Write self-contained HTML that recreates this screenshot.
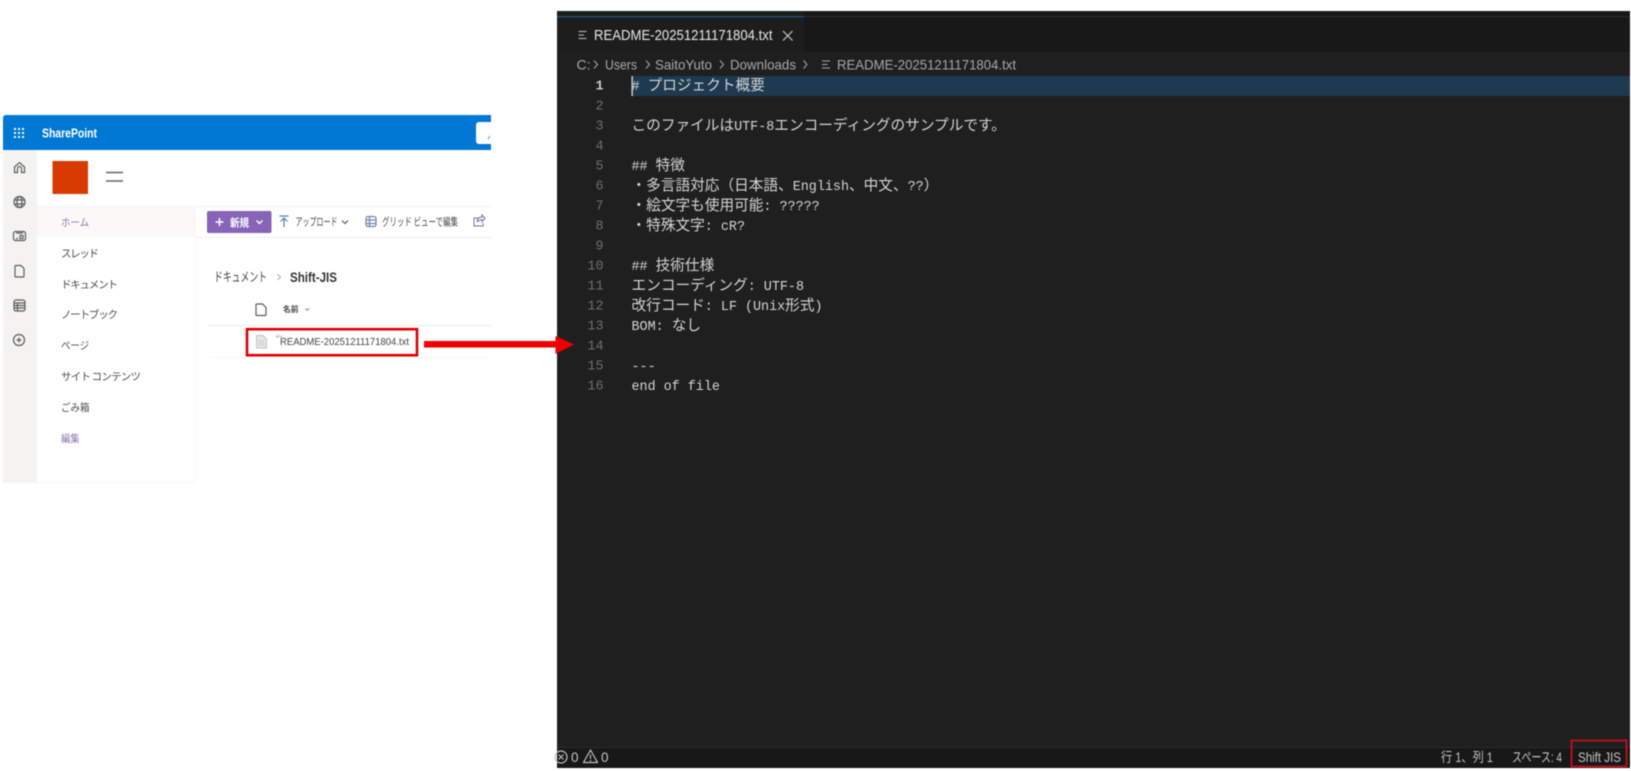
<!DOCTYPE html>
<html lang="ja"><head><meta charset="utf-8"><title>README</title>
<style>
html,body{margin:0;padding:0;background:#fff;width:1631px;height:771px;overflow:hidden}
svg{display:block;filter:blur(.45px)}
text{font-family:"Liberation Sans","Noto Sans CJK JP",sans-serif;dominant-baseline:auto}
.j{font-family:"Noto Sans CJK JP","Liberation Sans",sans-serif}
.nav{font-family:"Noto Sans CJK JP",sans-serif;font-size:10.5px;fill:#4c4c4c}
.cmd{font-family:"Noto Sans CJK JP",sans-serif;font-size:11px;fill:#4c4c4c}
.m{font-family:"Liberation Mono","Noto Sans CJK JP",monospace;font-size:13.4px;fill:#d4d4d4;white-space:pre}
.m tspan.c{font-family:"Noto Sans CJK JP",sans-serif;font-size:14.67px}
.n{font-family:"Liberation Mono",monospace;font-size:13.4px;fill:#6e6e6e;text-anchor:end}
.s{font-family:"Liberation Sans","Noto Sans CJK JP",sans-serif;font-size:13.5px;fill:#c4c4c4}
.ic{fill:none;stroke:#5c5c5c;stroke-width:1.2}
.vs{fill:none;stroke:#c0c0c0;stroke-width:1}
</style></head><body>
<svg width="1631" height="771" viewBox="0 0 1631 771" xmlns="http://www.w3.org/2000/svg">
<rect width="1631" height="771" fill="#fff"/>

<!-- SharePoint -->
<rect x="3" y="150" width="488" height="333" fill="#fff"/>
<rect x="3" y="150" width="34" height="333" fill="#f4f3f2"/>
<rect x="37" y="206" width="454" height="1" fill="#f3f2f1"/>
<rect x="37" y="207" width="159" height="30" fill="#faf9f8"/>
<rect x="196" y="237" width="295" height="1" fill="#f0efee"/>
<rect x="195" y="207" width="1" height="276" fill="#f8f7f6"/>
<rect x="37" y="482" width="159" height="1" fill="#f8f7f6"/>
<path d="M3 118a3 3 0 0 1 3-3H491V150H3Z" fill="#0078d4"/>
<path d="M491 122H479a3 3 0 0 0-3 3V141a3 3 0 0 0 3 3H491Z" fill="#fff"/>
<path d="M490 136l-2 3" stroke="#888" fill="none"/>
<g fill="#fff">
<rect x="14" y="128" width="2" height="2"/><rect x="18" y="128" width="2" height="2"/><rect x="22" y="128" width="2" height="2"/>
<rect x="14" y="132" width="2" height="2"/><rect x="18" y="132" width="2" height="2"/><rect x="22" y="132" width="2" height="2"/>
<rect x="14" y="136" width="2" height="2"/><rect x="18" y="136" width="2" height="2"/><rect x="22" y="136" width="2" height="2"/>
</g>
<text x="42" y="137.500" font-size="12.500" font-weight="700" fill="#fff" textLength="55" lengthAdjust="spacingAndGlyphs">SharePoint</text>

<!-- rail icons -->
<path class="ic" d="M14.500 172.500V167l5-4.500 5 4.500v5.500h-3v-4a2 2 0 0 0-4 0v4Z"/>
<g class="ic"><circle cx="19.500" cy="202" r="5.500"/><ellipse cx="19.500" cy="202" rx="2.500" ry="5.500"/><path d="M14 200h11M14 204h11"/></g>
<g class="ic"><rect x="13.500" y="231.500" width="12" height="9" rx="2"/><path d="M16 233h7M16 238.500h2M20 235.500h3v3h-3Z"/></g>
<path class="ic" d="M15.500 265.500h5.500l3 3v7.500a1 1 0 0 1-1 1h-7a1 1 0 0 1-1-1v-9.500a1 1 0 0 1 .500-1Z"/>
<g class="ic"><rect x="14" y="300" width="11" height="11" rx="2"/><path d="M14 303h11M14 305.500h11M14 308h11M17.500 303v8"/></g>
<g class="ic"><circle cx="19" cy="340" r="5.500"/><path d="M16.500 340h5M19 337.500v5" stroke-width="1.300"/></g>

<!-- logo -->
<rect x="52.500" y="161" width="35.500" height="33" fill="#d83b01"/>
<path d="M106 172.500h17M106 181h17" stroke="#666" stroke-width="1.600"/>

<!-- nav -->
<text class="nav" x="61" y="226" style="fill:#8a74b5" textLength="28" lengthAdjust="spacingAndGlyphs">ホーム</text>
<text class="nav" x="61" y="257" textLength="38" lengthAdjust="spacing">スレッド</text>
<text class="nav" x="61" y="288" textLength="57" lengthAdjust="spacing">ドキュメント</text>
<text class="nav" x="61" y="318" textLength="57" lengthAdjust="spacing">ノートブック</text>
<text class="nav" x="61" y="349" textLength="28" lengthAdjust="spacingAndGlyphs">ページ</text>
<text class="nav" x="61" y="380" textLength="80" lengthAdjust="spacing">サイト コンテンツ</text>
<text class="nav" x="61" y="411" textLength="28.500" lengthAdjust="spacingAndGlyphs">ごみ箱</text>
<text class="nav" x="61" y="442" style="fill:#8a74b5" textLength="18.500" lengthAdjust="spacingAndGlyphs">編集</text>

<!-- command bar -->
<rect x="207" y="211" width="64.500" height="22" rx="2" fill="#8764b8"/>
<path d="M215.500 222h8M219.500 218v8" stroke="#fff" stroke-width="1.500"/>
<text x="230" y="226.500" class="j" font-size="11" font-weight="700" fill="#fff" textLength="19" lengthAdjust="spacingAndGlyphs">新規</text>
<path d="M256.500 220.500l3 3 3-3" stroke="#fff" stroke-width="1.400" fill="none"/>
<path class="ic" d="M279.500 216h9M284 227v-9M280.500 221.500l3.500-3.500 3.500 3.500" style="stroke:#5a7fa8"/>
<text class="cmd" x="295.500" y="225.500" textLength="42" lengthAdjust="spacingAndGlyphs">アップロード</text>
<path class="ic" d="M342 220.500l3 3 3-3" stroke-width="1.300"/>
<g class="ic" style="stroke:#6b87a8"><rect x="366" y="216.500" width="10" height="10" rx="2"/><path d="M366 220h10M366 223.500h10M369.500 216.500v10"/></g>
<text class="cmd" x="382" y="225.500" textLength="76" lengthAdjust="spacingAndGlyphs">グリッド ビューで編集</text>
<path class="ic" d="M479 218h-5v8h9v-3M477 222c0-3 2-5 5-5v-2l3 3.500-3 3v-2c-2 0-3 1-4 2.500" style="stroke:#7a6aa8;stroke-width:1"/>

<!-- breadcrumb -->
<text class="j" x="214" y="281.500" font-size="13" fill="#444" textLength="53" lengthAdjust="spacingAndGlyphs">ドキュメント</text>
<path d="M277.500 274l3 3-3 3" stroke="#aaa" fill="none"/>
<text x="290" y="282" font-size="13.500" font-weight="700" fill="#333" textLength="47" lengthAdjust="spacingAndGlyphs">Shift-JIS</text>

<!-- list -->
<path class="ic" d="M257 304h5.500l3.500 3.500v7a1 1 0 0 1-1 1h-8a1 1 0 0 1-1-1v-9.500a1 1 0 0 1 1-1Z"/>
<text class="j" x="283" y="312" font-size="8" font-weight="700" fill="#444" textLength="15.500" lengthAdjust="spacingAndGlyphs">名前</text>
<path d="M305.500 308.500l1.800 1.800 1.800-1.800" stroke="#888" fill="none"/>
<rect x="208" y="325" width="283" height="1" fill="#ecebea"/>
<rect x="208" y="357" width="283" height="1" fill="#f8f7f6"/>
<path d="M256.500 335.500h6.500l3.500 3.500v9h-10Z" fill="#e6e6e6" stroke="#c4c4c4"/>
<path d="M258.500 341h6M258.500 343h6M258.500 345h6" stroke="#cfcfcf"/>
<path d="M276 336l2 1.500M278.500 334.500v2.500M280 337l2-1" stroke="#999" fill="none" stroke-width=".8"/>
<text x="280" y="345" font-size="10.500" fill="#444" textLength="129" lengthAdjust="spacingAndGlyphs">README-20251211171804.txt</text>
<rect x="247" y="329.200" width="170" height="26" fill="none" stroke="#e00000" stroke-width="2.600"/>

<!-- VS Code -->
<rect x="557" y="11" width="1073" height="757" fill="#1f1f1f"/>
<rect x="557" y="11" width="1073" height="41" fill="#181818"/>
<rect x="557" y="11" width="247" height="41" fill="#1d1d1d"/>
<rect x="804" y="16" width="826" height="1" fill="#2b2b2b"/>
<rect x="557" y="16" width="247" height="1.400" fill="#1f4f75"/>
<path class="vs" d="M578.500 31.500h8M578.500 35h5.500M578.500 38.500h8"/>
<text x="594" y="40" font-size="15" fill="#e6e6e6" textLength="178.500" lengthAdjust="spacingAndGlyphs">README-20251211171804.txt</text>
<path d="M783 31l9.500 9.500M792.500 31l-9.500 9.500" stroke="#d0d0d0" stroke-width="1.100"/>

<g font-size="14" fill="#a8a8a8">
<text x="576.500" y="69.500">C:</text>
<path d="M594 60.500l3.500 4-3.500 4M646 60.500l3.500 4-3.500 4M720 60.500l3.500 4-3.500 4M803.500 60.500l3.500 4-3.500 4" stroke="#a8a8a8" fill="none"/>
<text x="605" y="69.500" textLength="32" lengthAdjust="spacingAndGlyphs">Users</text>
<text x="655" y="69.500" textLength="57" lengthAdjust="spacingAndGlyphs">SaitoYuto</text>
<text x="730" y="69.500" textLength="66" lengthAdjust="spacingAndGlyphs">Downloads</text>
<path d="M822 61h8M822 64.500h5.500M822 68h8" stroke="#a8a8a8" fill="none"/>
<text x="837" y="69.500" textLength="179" lengthAdjust="spacingAndGlyphs">README-20251211171804.txt</text>
</g>

<!-- editor -->
<rect x="632" y="76" width="998" height="20" fill="#1e3a50"/>
<rect x="631.400" y="76" width="1.500" height="20" fill="#c8c8c8"/>

<g transform="translate(0,-1.500)">
<text class="n" x="603.500" y="91" style="fill:#ccc;font-weight:700">1</text>
<text class="n" x="603.500" y="111">2</text>
<text class="n" x="603.500" y="131">3</text>
<text class="n" x="603.500" y="151">4</text>
<text class="n" x="603.500" y="171">5</text>
<text class="n" x="603.500" y="191">6</text>
<text class="n" x="603.500" y="211">7</text>
<text class="n" x="603.500" y="231">8</text>
<text class="n" x="603.500" y="251">9</text>
<text class="n" x="603.500" y="271">10</text>
<text class="n" x="603.500" y="291">11</text>
<text class="n" x="603.500" y="311">12</text>
<text class="n" x="603.500" y="331">13</text>
<text class="n" x="603.500" y="351">14</text>
<text class="n" x="603.500" y="371">15</text>
<text class="n" x="603.500" y="391">16</text>
</g>

<g transform="translate(-.5,-1)">
<text class="m" x="632" y="91" xml:space="preserve"># <tspan class="c">プロジェクト概要</tspan></text>
<text class="m" x="632" y="131" xml:space="preserve"><tspan class="c">このファイルは</tspan>UTF-8<tspan class="c">エンコーディングのサンプルです。</tspan></text>
<text class="m" x="632" y="171" xml:space="preserve">## <tspan class="c">特徴</tspan></text>
<text class="m" x="632" y="191" xml:space="preserve"><tspan class="c">・多言語対応（日本語、</tspan>English<tspan class="c">、中文、</tspan>??<tspan class="c">）</tspan></text>
<text class="m" x="632" y="211" xml:space="preserve"><tspan class="c">・絵文字も使用可能</tspan>: ?????</text>
<text class="m" x="632" y="231" xml:space="preserve"><tspan class="c">・特殊文字</tspan>: cR?</text>
<text class="m" x="632" y="271" xml:space="preserve">## <tspan class="c">技術仕様</tspan></text>
<text class="m" x="632" y="291" xml:space="preserve"><tspan class="c">エンコーディング</tspan>: UTF-8</text>
<text class="m" x="632" y="311" xml:space="preserve"><tspan class="c">改行コード</tspan>: LF (Unix<tspan class="c">形式</tspan>)</text>
<text class="m" x="632" y="331" xml:space="preserve">BOM: <tspan class="c">なし</tspan></text>
<text class="m" x="632" y="371" xml:space="preserve">---</text>
<text class="m" x="632" y="391" xml:space="preserve">end of file</text>
</g>

<!-- status bar -->
<rect x="557" y="747" width="1073" height="21" fill="#181818"/>
<rect x="557" y="747" width="1073" height="1" fill="#2b2b2b"/>
<circle cx="561" cy="757" r="6" fill="none" stroke="#c0c0c0" stroke-width="1.200"/>
<path d="M558.500 754.500l5 5M563.500 754.500l-5 5" stroke="#c0c0c0" stroke-width="1.100"/>
<text class="s" x="571" y="762">0</text>
<path d="M590.500 750l7 12.500h-14Z" fill="none" stroke="#c0c0c0" stroke-width="1.200" stroke-linejoin="round"/>
<path d="M590.500 754.500v4.500M590.500 760v1.500" stroke="#c0c0c0" stroke-width="1.100"/>
<text class="s" x="601" y="762">0</text>
<text class="s" x="1441" y="762" textLength="52" lengthAdjust="spacingAndGlyphs">行 1、列 1</text>
<text class="s" x="1512" y="762" textLength="50" lengthAdjust="spacingAndGlyphs">スペース: 4</text>
<text class="s" x="1578" y="762" textLength="43" lengthAdjust="spacingAndGlyphs">Shift JIS</text>
<rect x="1571.500" y="740.500" width="55" height="26" fill="none" stroke="#c40f1a" stroke-width="1.800"/>

<!-- arrow -->
<rect x="424" y="341" width="134" height="6.500" fill="#f00000"/>
<path d="M555.500 336L574 344.500L555.500 354Z" fill="#f00000"/>
</svg>
</body></html>
